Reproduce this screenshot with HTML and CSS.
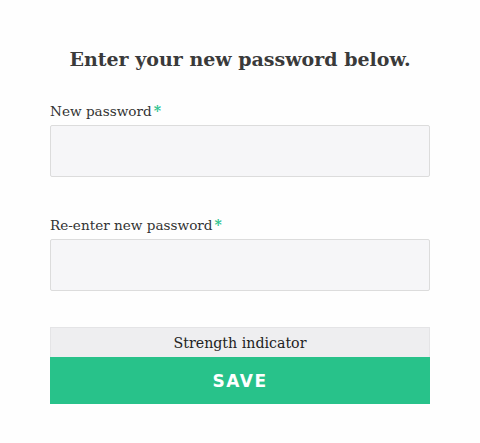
FILE: index.html
```html
<!DOCTYPE html>
<html>
<head>
<meta charset="utf-8">
<link rel="stylesheet" href="styles.css">
</head>
<body>
<div class="page">
  <h1 class="title">Enter your new password below.</h1>
  <form class="form">
    <label class="field">
      <span class="label">New password<span class="req">*</span></span>
      <input class="input" type="password">
    </label>
    <label class="field field2">
      <span class="label">Re-enter new password<span class="req">*</span></span>
      <input class="input" type="password">
    </label>
    <div class="actions">
      <div class="strength">Strength indicator</div>
      <button class="save" type="button">SAVE</button>
    </div>
  </form>
</div>
</body>
</html>
```
FILE: styles.css
```css
html, body { margin: 0; padding: 0; background: #fefefe; }
body { font-family: "DejaVu Serif", "Liberation Serif", serif; color: #333; }
.page { width: 480px; height: 443px; box-sizing: border-box; padding: 46px 50px 0; }
.title { margin: 0; text-align: center; font-size: 19px; font-weight: bold; line-height: 26px; color: #3a3a3a; }
.form { display: flex; flex-direction: column; margin-top: 29px; }
.field { display: flex; flex-direction: column; }
.field2 { margin-top: 38px; }
.label { font-size: 13.6px; line-height: 21px; color: #333; }
.req { color: #2dc38f; font-weight: bold; margin-left: 2px; font-size: 14px; }
.input { margin-top: 3px; height: 52px; box-sizing: border-box; border: 1px solid #dcdcdc; background: #f6f6f8; border-radius: 2px; outline: none; }
.actions { margin-top: 36px; display: flex; flex-direction: column; }
.strength { height: 30px; box-sizing: border-box; border: 1px solid #e4e4e6; border-bottom: none; background: #eeeef0; text-align: center; font-size: 14.2px; line-height: 30px; color: #222; }
.save { height: 47px; border: none; background: #28c28a; color: #fff; font-family: "DejaVu Sans", sans-serif; font-weight: bold; font-size: 17px; letter-spacing: 1.5px; padding: 0; }
```
